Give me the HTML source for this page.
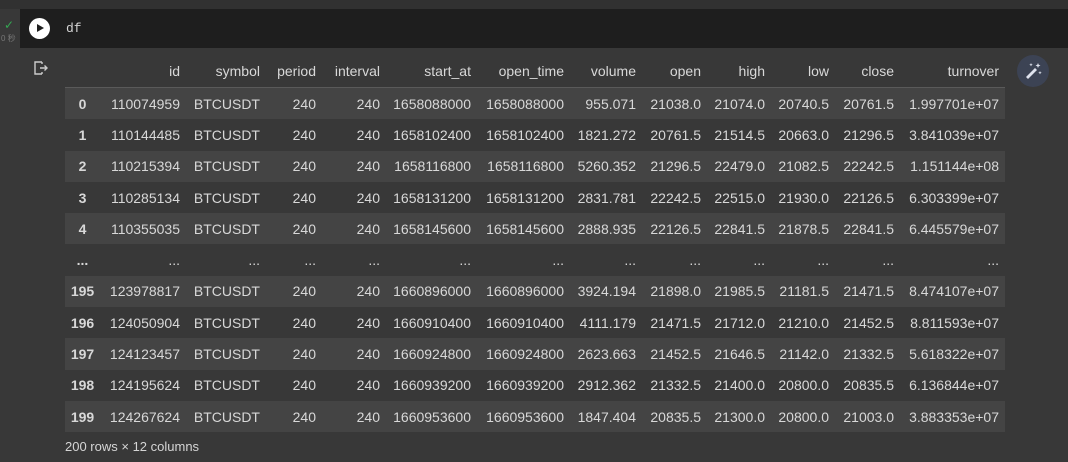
<!DOCTYPE html><html><head><style>
body{margin:0;width:1068px;height:462px;background:#383838;font-family:"Liberation Sans",sans-serif;overflow:hidden;position:relative;color:#d5d5d5}
.top{position:absolute;left:0;top:0;width:1068px;height:9px;background:#313131}
.code{position:absolute;left:20px;top:9px;width:1048px;height:39px;background:#1e1e1e}
.df{position:absolute;left:66px;top:21px;font-family:"Liberation Mono",monospace;font-size:13px;color:#d4d4d4}
.run{position:absolute;left:29px;top:18px;width:21px;height:21px;border-radius:50%;background:#fff}
.run:after{content:"";position:absolute;left:8px;top:6px;border-left:7px solid #1e1e1e;border-top:4.5px solid transparent;border-bottom:4.5px solid transparent}
table{position:absolute;left:65px;top:55px;width:940px;border-collapse:collapse;font-size:14px;table-layout:fixed}
td,th{text-align:right;padding:0 6px 0 0;height:31.3px;white-space:nowrap;font-weight:normal;color:#d8d8d8;overflow:visible}
thead th{height:32px;border-bottom:1px solid #5a5a5a}
tbody tr:nth-child(odd){background:#444}
tbody th{text-align:center;font-weight:bold;padding:0}
.foot{position:absolute;left:65px;top:439px;font-size:13px;color:#d5d5d5}
.magic{position:absolute;left:1017px;top:55px;width:32px;height:32px;border-radius:50%;background:#3c4354}
</style></head><body>
<div class="top"></div>
<div class="code"></div>
<div style="position:absolute;left:4px;top:18px;color:#34a853;font-size:12px">✓</div>
<div style="position:absolute;left:1px;top:33px;color:#777;font-size:8px;font-family:'Liberation Sans','Noto Sans CJK SC',sans-serif">0 秒</div>
<div class="run"></div>
<div class="df">df</div>
<svg style="position:absolute;left:33px;top:60px" width="16" height="16" viewBox="0 0 16 16" fill="none" stroke="#ccc" stroke-width="1.4"><path d="M9 2H2v12h7M9 2v2M9 14v-2M7 8h7M11.5 5.5L14 8l-2.5 2.5"/></svg>
<div class="magic"><svg width="32" height="32" viewBox="0 0 32 32" fill="#dfe3ee"><path d="M9 22l9-9 2 2-9 9z" /><path d="M21 8l.7 1.8 1.8.7-1.8.7L21 13l-.7-1.8-1.8-.7 1.8-.7z"/><path d="M14 8l.5 1.2 1.2.5-1.2.5-.5 1.2-.5-1.2-1.2-.5 1.2-.5z"/><path d="M23 16l.5 1.2 1.2.5-1.2.5-.5 1.2-.5-1.2-1.2-.5 1.2-.5z"/></svg></div>
<table>
<colgroup><col style="width:35px"><col style="width:86px"><col style="width:80px"><col style="width:56px"><col style="width:64px"><col style="width:91px"><col style="width:93px"><col style="width:72px"><col style="width:65px"><col style="width:64px"><col style="width:64px"><col style="width:65px"><col style="width:105px"></colgroup>
<thead><tr><th></th><th>id</th><th>symbol</th><th>period</th><th>interval</th><th>start_at</th><th>open_time</th><th>volume</th><th>open</th><th>high</th><th>low</th><th>close</th><th>turnover</th></tr></thead>
<tbody>
<tr><th>0</th><td>110074959</td><td>BTCUSDT</td><td>240</td><td>240</td><td>1658088000</td><td>1658088000</td><td>955.071</td><td>21038.0</td><td>21074.0</td><td>20740.5</td><td>20761.5</td><td>1.997701e+07</td></tr>
<tr><th>1</th><td>110144485</td><td>BTCUSDT</td><td>240</td><td>240</td><td>1658102400</td><td>1658102400</td><td>1821.272</td><td>20761.5</td><td>21514.5</td><td>20663.0</td><td>21296.5</td><td>3.841039e+07</td></tr>
<tr><th>2</th><td>110215394</td><td>BTCUSDT</td><td>240</td><td>240</td><td>1658116800</td><td>1658116800</td><td>5260.352</td><td>21296.5</td><td>22479.0</td><td>21082.5</td><td>22242.5</td><td>1.151144e+08</td></tr>
<tr><th>3</th><td>110285134</td><td>BTCUSDT</td><td>240</td><td>240</td><td>1658131200</td><td>1658131200</td><td>2831.781</td><td>22242.5</td><td>22515.0</td><td>21930.0</td><td>22126.5</td><td>6.303399e+07</td></tr>
<tr><th>4</th><td>110355035</td><td>BTCUSDT</td><td>240</td><td>240</td><td>1658145600</td><td>1658145600</td><td>2888.935</td><td>22126.5</td><td>22841.5</td><td>21878.5</td><td>22841.5</td><td>6.445579e+07</td></tr>
<tr style="background:#383838"><th>...</th><td>...</td><td>...</td><td>...</td><td>...</td><td>...</td><td>...</td><td>...</td><td>...</td><td>...</td><td>...</td><td>...</td><td>...</td></tr>
<tr style="background:#444"><th>195</th><td>123978817</td><td>BTCUSDT</td><td>240</td><td>240</td><td>1660896000</td><td>1660896000</td><td>3924.194</td><td>21898.0</td><td>21985.5</td><td>21181.5</td><td>21471.5</td><td>8.474107e+07</td></tr>
<tr style="background:#383838"><th>196</th><td>124050904</td><td>BTCUSDT</td><td>240</td><td>240</td><td>1660910400</td><td>1660910400</td><td>4111.179</td><td>21471.5</td><td>21712.0</td><td>21210.0</td><td>21452.5</td><td>8.811593e+07</td></tr>
<tr style="background:#444"><th>197</th><td>124123457</td><td>BTCUSDT</td><td>240</td><td>240</td><td>1660924800</td><td>1660924800</td><td>2623.663</td><td>21452.5</td><td>21646.5</td><td>21142.0</td><td>21332.5</td><td>5.618322e+07</td></tr>
<tr style="background:#383838"><th>198</th><td>124195624</td><td>BTCUSDT</td><td>240</td><td>240</td><td>1660939200</td><td>1660939200</td><td>2912.362</td><td>21332.5</td><td>21400.0</td><td>20800.0</td><td>20835.5</td><td>6.136844e+07</td></tr>
<tr style="background:#444"><th>199</th><td>124267624</td><td>BTCUSDT</td><td>240</td><td>240</td><td>1660953600</td><td>1660953600</td><td>1847.404</td><td>20835.5</td><td>21300.0</td><td>20800.0</td><td>21003.0</td><td>3.883353e+07</td></tr>
</tbody></table>
<div class="foot">200 rows × 12 columns</div>
</body></html>
